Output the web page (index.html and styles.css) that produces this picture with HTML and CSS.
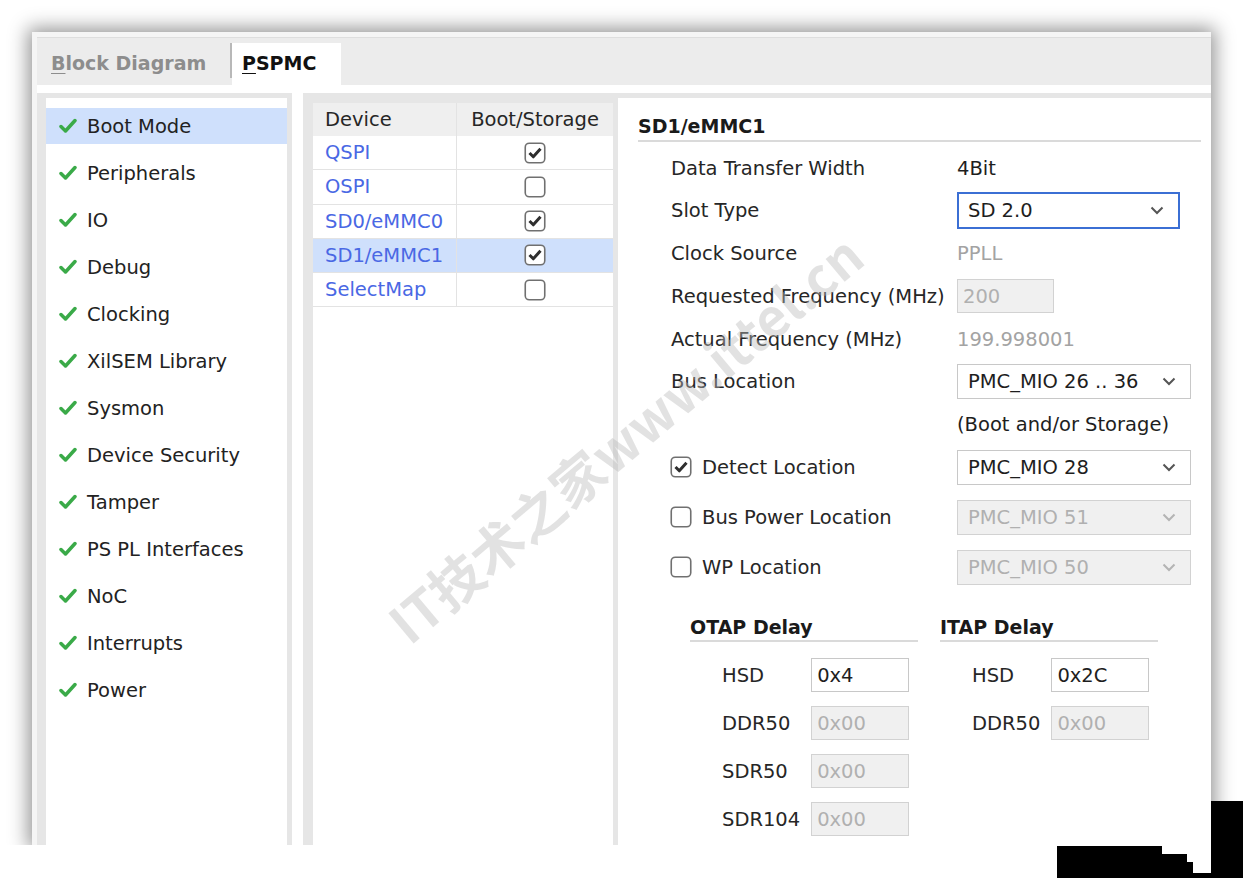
FILE: index.html
```html
<!DOCTYPE html>
<html lang="en">
<head>
    <meta charset="UTF-8">
    <meta name="viewport" content="width=device-width, initial-scale=1.0">
    <title>PSPMC</title>
    <link rel="stylesheet" href="styles.css">
</head>
<body>
    <svg class="defs" width="0" height="0" aria-hidden="true">
        <symbol id="ok" viewBox="0 0 18 16">
            <path d="M2 8.5 L6.5 13 L16 2.5" fill="none" stroke="#3aaa48" stroke-width="3.5" stroke-linecap="round" stroke-linejoin="round"/>
        </symbol>
        <symbol id="box" viewBox="0 0 22 22">
            <rect x="1.25" y="1.25" width="19.5" height="19.5" rx="4" fill="#fff" stroke="#707070" stroke-width="1.6"/>
        </symbol>
        <symbol id="box-on" viewBox="0 0 22 22">
            <rect x="1.25" y="1.25" width="19.5" height="19.5" rx="4" fill="#fff" stroke="#707070" stroke-width="1.6"/>
            <path d="M5.5 11 L9.3 14.8 L16.5 6.8" fill="none" stroke="#2e2e2e" stroke-width="3" stroke-linejoin="round"/>
        </symbol>
        <symbol id="chev" viewBox="0 0 14 9">
            <path d="M1.5 1.5 L7 7 L12.5 1.5" fill="none" stroke="currentColor" stroke-width="2"/>
        </symbol>
    </svg>

    <div class="window">
        <div class="tab-bar">
            <div class="tab"><u>B</u>lock Diagram</div>
            <div class="tab-sep"></div>
            <div class="tab active"><u>P</u>SPMC</div>
        </div>

        <div class="content">
            <!-- 左侧导航 -->
            <div class="nav-panel">
                <ul class="nav-list">
                    <li class="selected"><svg class="ok"><use href="#ok"/></svg>Boot Mode</li>
                    <li><svg class="ok"><use href="#ok"/></svg>Peripherals</li>
                    <li><svg class="ok"><use href="#ok"/></svg>IO</li>
                    <li><svg class="ok"><use href="#ok"/></svg>Debug</li>
                    <li><svg class="ok"><use href="#ok"/></svg>Clocking</li>
                    <li><svg class="ok"><use href="#ok"/></svg>XilSEM Library</li>
                    <li><svg class="ok"><use href="#ok"/></svg>Sysmon</li>
                    <li><svg class="ok"><use href="#ok"/></svg>Device Security</li>
                    <li><svg class="ok"><use href="#ok"/></svg>Tamper</li>
                    <li><svg class="ok"><use href="#ok"/></svg>PS PL Interfaces</li>
                    <li><svg class="ok"><use href="#ok"/></svg>NoC</li>
                    <li><svg class="ok"><use href="#ok"/></svg>Interrupts</li>
                    <li><svg class="ok"><use href="#ok"/></svg>Power</li>
                </ul>
            </div>

            <!-- 设备表 -->
            <div class="device-panel">
                <div class="device-table">
                    <div class="dev-row head">
                        <div class="dev-cell">Device</div>
                        <div class="dev-cell mid">Boot/Storage</div>
                    </div>
                    <div class="dev-row">
                        <div class="dev-cell link">QSPI</div>
                        <div class="dev-cell mid"><svg class="cb"><use href="#box-on"/></svg></div>
                    </div>
                    <div class="dev-row">
                        <div class="dev-cell link">OSPI</div>
                        <div class="dev-cell mid"><svg class="cb"><use href="#box"/></svg></div>
                    </div>
                    <div class="dev-row">
                        <div class="dev-cell link">SD0/eMMC0</div>
                        <div class="dev-cell mid"><svg class="cb"><use href="#box-on"/></svg></div>
                    </div>
                    <div class="dev-row selected">
                        <div class="dev-cell link">SD1/eMMC1</div>
                        <div class="dev-cell mid"><svg class="cb"><use href="#box-on"/></svg></div>
                    </div>
                    <div class="dev-row">
                        <div class="dev-cell link">SelectMap</div>
                        <div class="dev-cell mid"><svg class="cb"><use href="#box"/></svg></div>
                    </div>
                </div>
            </div>

            <!-- 配置 -->
            <div class="config-panel">
                <div class="section-title">SD1/eMMC1</div>
                <div class="form">
                    <div class="field">
                        <span class="label">Data Transfer Width</span>
                        <span class="value">4Bit</span>
                    </div>
                    <div class="field">
                        <span class="label">Slot Type</span>
                        <div class="select focus">SD 2.0<svg class="chev"><use href="#chev"/></svg></div>
                    </div>
                    <div class="field">
                        <span class="label">Clock Source</span>
                        <span class="value muted">PPLL</span>
                    </div>
                    <div class="field">
                        <span class="label">Requested Frequency (MHz)</span>
                        <div class="text-box small disabled">200</div>
                    </div>
                    <div class="field">
                        <span class="label">Actual Frequency (MHz)</span>
                        <span class="value muted">199.998001</span>
                    </div>
                    <div class="field">
                        <span class="label">Bus Location</span>
                        <div class="select">PMC_MIO 26 .. 36<svg class="chev"><use href="#chev"/></svg></div>
                    </div>
                    <div class="field">
                        <span class="label"></span>
                        <span class="value">(Boot and/or Storage)</span>
                    </div>
                    <div class="field check">
                        <svg class="cb"><use href="#box-on"/></svg>
                        <span class="label">Detect Location</span>
                        <div class="select">PMC_MIO 28<svg class="chev"><use href="#chev"/></svg></div>
                    </div>
                    <div class="field check spaced">
                        <svg class="cb"><use href="#box"/></svg>
                        <span class="label">Bus Power Location</span>
                        <div class="select disabled">PMC_MIO 51<svg class="chev"><use href="#chev"/></svg></div>
                    </div>
                    <div class="field check spaced">
                        <svg class="cb"><use href="#box"/></svg>
                        <span class="label">WP Location</span>
                        <div class="select disabled">PMC_MIO 50<svg class="chev"><use href="#chev"/></svg></div>
                    </div>
                </div>

                <div class="delay">
                    <div class="delay-group otap">
                        <div class="delay-title">OTAP Delay</div>
                        <div class="delay-grid">
                            <span>HSD</span><div class="text-box">0x4</div>
                            <span>DDR50</span><div class="text-box disabled">0x00</div>
                            <span>SDR50</span><div class="text-box disabled">0x00</div>
                            <span>SDR104</span><div class="text-box disabled">0x00</div>
                        </div>
                    </div>
                    <div class="delay-group itap">
                        <div class="delay-title">ITAP Delay</div>
                        <div class="delay-grid">
                            <span>HSD</span><div class="text-box">0x2C</div>
                            <span>DDR50</span><div class="text-box disabled">0x00</div>
                        </div>
                    </div>
                </div>
            </div>
        </div>
    </div>

    <div class="watermark">IT技术之家www.ittel.cn</div>

    <div class="mark m1"></div>
    <div class="mark m2"></div>
    <div class="mark m3"></div>
    <div class="mark m4"></div>
    <div class="mark m5"></div>
</body>
</html>
```

FILE: styles.css
```css
body {
    margin: 0;
    background: #fff;
    font-family: "DejaVu Sans", Verdana, sans-serif;
    font-size: 19.5px;
    color: #262626;
}
.defs {
    position: absolute;
    width: 0;
    height: 0;
}
.window {
    width: 1179px;
    height: 813px;
    margin: 32px 0 0 32px;
    padding: 5px 0 0 5px;
    box-sizing: border-box;
    background: #f5f5f5;
    box-shadow: 0 0 18px 4px rgba(0, 0, 0, 0.42);
    display: flex;
    flex-direction: column;
}

/* 标签栏 */
.tab-bar {
    height: 48px;
    box-sizing: border-box;
    display: flex;
    align-items: flex-end;
    background: #ececec;
    border-top: 1px solid #dedede;
}
.tab {
    width: 193px;
    height: 42px;
    box-sizing: border-box;
    padding: 0 0 3px 14px;
    display: flex;
    align-items: center;
    font-size: 19px;
    font-weight: bold;
    color: #8d8d8d;
}
.tab u {
    text-underline-offset: 3px;
}
.tab-sep {
    align-self: flex-start;
    width: 2px;
    height: 35px;
    margin-top: 5px;
    background: #b8b8b8;
}
.tab.active {
    width: 109px;
    padding-left: 10px;
    background: #fff;
    color: #111;
}

.content {
    flex: 1;
    display: flex;
    background: #fff;
    padding-top: 8px;
}

/* 导航 */
.nav-panel {
    width: 255px;
    box-sizing: border-box;
    background: #e6e6e6;
    padding: 5px 5px 0 9px;
}
.nav-list {
    height: 100%;
    box-sizing: border-box;
    margin: 0;
    padding: 10px 0 0;
    list-style: none;
    background: #fff;
}
.nav-list li {
    height: 36px;
    margin-bottom: 11px;
    padding-left: 13px;
    display: flex;
    align-items: center;
    gap: 10px;
    color: #222;
}
.nav-list li.selected {
    background: #cfe0fc;
}
.ok {
    width: 18px;
    height: 16px;
}

/* 设备表 */
.device-panel {
    width: 315px;
    margin-left: 11px;
    box-sizing: border-box;
    background: #e6e6e6;
    padding: 10px 5px 0 10px;
}
.device-table {
    height: 100%;
    background: #fff;
}
.dev-row {
    display: grid;
    grid-template-columns: 144px 156px;
    height: 34.25px;
    box-sizing: border-box;
    border-bottom: 1px solid #e3e3e3;
}
.dev-row.head {
    height: 33px;
    background: #efefef;
    border-bottom: none;
}
.dev-row.selected {
    background: #cfe0fc;
}
.dev-cell {
    display: flex;
    align-items: center;
    padding-left: 12px;
    border-right: 1px solid #e3e3e3;
}
.dev-cell.mid {
    justify-content: center;
    padding-left: 0;
    border-right: none;
}
.dev-cell.link {
    color: #4a68e4;
}
.cb {
    width: 22px;
    height: 22px;
}

/* 配置面板 */
.config-panel {
    flex: 1;
    border-top: 5px solid #e6e6e6;
    padding: 0 10px 0 20px;
}
.section-title {
    margin-top: 17px;
    line-height: 22px;
    padding-bottom: 3px;
    font-size: 19px;
    font-weight: bold;
    color: #1a1a1a;
    border-bottom: 2px solid #dadada;
}
.form {
    margin-top: 8px;
    display: flex;
    flex-direction: column;
    gap: 6.75px;
}
.field {
    height: 36px;
    padding-left: 33px;
    display: flex;
    align-items: center;
}
.field.spaced {
    margin-top: 7.25px;
}
.field .label {
    width: 286px;
    flex-shrink: 0;
}
.field.check {
    padding-left: 32px;
}
.field.check .label {
    width: 255px;
    margin-left: 10px;
}
.value {
    color: #1e1e1e;
}
.value.muted {
    color: #a3a3a3;
}
.select {
    width: 234px;
    height: 35px;
    box-sizing: border-box;
    border: 1px solid #c8c8c8;
    padding: 0 14px 0 10px;
    display: flex;
    align-items: center;
    justify-content: space-between;
    color: #1e1e1e;
    background: #fff;
}
.select.focus {
    width: 223px;
    height: 37px;
    border: 2px solid #3b6fd4;
    padding-left: 9px;
}
.select.disabled {
    background: #f0f0f0;
    border-color: #d2d2d2;
    color: #b0b0b0;
}
.chev {
    width: 14px;
    height: 9px;
    color: #555;
}
.select.disabled .chev {
    color: #b4b4b4;
}
.text-box {
    width: 98px;
    height: 34px;
    box-sizing: border-box;
    border: 1px solid #c8c8c8;
    padding-left: 5px;
    display: flex;
    align-items: center;
    background: #fff;
    color: #1e1e1e;
}
.text-box.small {
    width: 97px;
}
.text-box.disabled {
    background: #f0f0f0;
    border-color: #d2d2d2;
    color: #b0b0b0;
}

/* 延迟设置 */
.delay {
    display: flex;
    gap: 22px;
    margin-top: 31px;
    padding-left: 52px;
}
.delay-group.otap {
    width: 228px;
}
.delay-group.itap {
    width: 218px;
}
.delay-title {
    line-height: 22px;
    padding-bottom: 2px;
    font-size: 19px;
    font-weight: bold;
    color: #1a1a1a;
    border-bottom: 2px solid #dadada;
}
.delay-grid {
    display: grid;
    grid-template-columns: auto 98px;
    justify-content: start;
    align-items: center;
    column-gap: 11px;
    row-gap: 14px;
    margin-top: 16px;
    padding-left: 32px;
}
.delay-grid span {
    color: #262626;
}

/* 水印 */
.watermark {
    position: absolute;
    left: 624px;
    top: 437px;
    transform: translate(-50%, -50%) rotate(-40deg);
    white-space: nowrap;
    font-family: "Noto Sans CJK SC", "DejaVu Sans", sans-serif;
    font-size: 53px;
    font-weight: bold;
    color: rgba(185, 185, 185, 0.42);
    pointer-events: none;
}

/* 截图边角 */
.mark {
    position: absolute;
    background: #000;
}
.m1 { left: 1057px; top: 846px; width: 105px; height: 32px; }
.m2 { left: 1162px; top: 854px; width: 25px; height: 24px; }
.m3 { left: 1187px; top: 862px; width: 6px; height: 16px; }
.m4 { left: 1193px; top: 873px; width: 18px; height: 5px; }
.m5 { left: 1211px; top: 801px; width: 32px; height: 77px; }
```
